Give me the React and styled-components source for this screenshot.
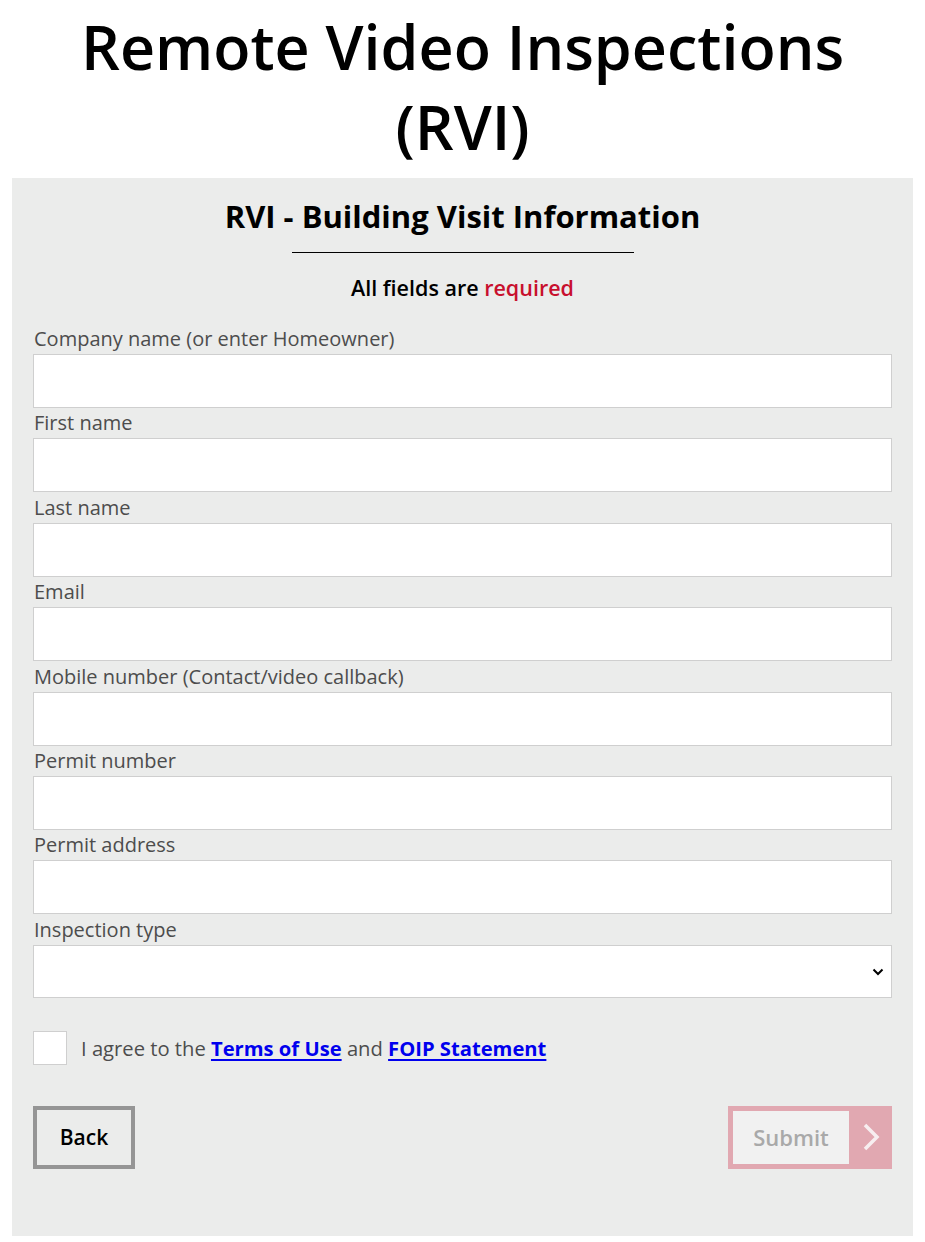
import React from 'react';
import styled, { createGlobalStyle } from 'styled-components';

const GlobalStyle = createGlobalStyle`
  body {
    margin: 0;
    background: #ffffff;
    font-family: "Open Sans", "Liberation Sans", sans-serif;
  }
`;

const Page = styled.div`
  padding: 0 12px 6px;
`;

const Title = styled.h1`
  margin: 0;
  padding-top: 7px;
  text-align: center;
  font-size: 61px;
  line-height: 80px;
  font-weight: 600;
  color: #000;
  height: 171px;
`;

const Panel = styled.div`
  background-color: #ebeceb;
  padding: 19px 21px 67px 21px;
`;

const FormTitle = styled.h2`
  margin: 0;
  text-align: center;
  font-size: 31px;
  line-height: 38px;
  font-weight: 700;
  color: #000;
`;

const Divider = styled.hr`
  width: 342px;
  margin: 17px auto 0;
  border: none;
  border-top: 1px solid #000;
`;

const Required = styled.p`
  margin: 20px 0 21px;
  text-align: center;
  font-size: 21.5px;
  line-height: 30px;
  font-weight: 600;
  color: #000;
  span {
    color: #c8102e;
  }
`;

const Field = styled.div`
  display: flex;
  flex-direction: column;
  margin-bottom: 0.4px;
`;

const Label = styled.label`
  font-size: 20px;
  line-height: 30px;
  color: #4d4d4d;
  padding-left: 1px;
`;

const Input = styled.input`
  box-sizing: border-box;
  height: 54px;
  width: 100%;
  border: 1px solid #cfcfcf;
  background: #fff;
  outline: none;
  font-size: 18px;
  padding: 0 12px;
`;

const SelectWrap = styled.div`
  position: relative;
`;

const Select = styled.select`
  box-sizing: border-box;
  appearance: none;
  height: 53px;
  width: 100%;
  border: 1px solid #cfcfcf;
  background: #fff;
  outline: none;
  font-size: 18px;
  padding: 0 12px;
`;

const Chevron = styled.svg`
  position: absolute;
  right: 8px;
  top: 22px;
  pointer-events: none;
`;

const AgreeRow = styled.div`
  display: flex;
  align-items: center;
  gap: 14px;
  margin-top: 33px;
`;

const Box = styled.span`
  box-sizing: border-box;
  width: 34px;
  height: 34px;
  background: #fff;
  border: 1px solid #cfcfcf;
`;

const AgreeText = styled.span`
  font-size: 20.2px;
  color: #4d4d4d;
  a {
    color: #0000ee;
    font-weight: 700;
    text-decoration: underline;
    text-underline-offset: 3px;
  }
`;

const Actions = styled.div`
  display: flex;
  justify-content: space-between;
  margin-top: 41px;
`;

const BackButton = styled.button`
  box-sizing: border-box;
  width: 102px;
  height: 63px;
  background: transparent;
  border: 4px solid #959595;
  font-family: "Open Sans", "Liberation Sans", sans-serif;
  font-size: 21px;
  font-weight: 600;
  color: #000;
`;

const SubmitButton = styled.button`
  box-sizing: border-box;
  display: flex;
  height: 63px;
  padding: 5px 0 5px 5px;
  background: #e1a8b1;
  border: none;
  font-family: "Open Sans", "Liberation Sans", sans-serif;
`;

const SubmitLabel = styled.span`
  display: flex;
  align-items: center;
  justify-content: center;
  width: 116px;
  background: #f1f1f1;
  font-size: 22px;
  font-weight: 600;
  color: #a9a9a9;
`;

const Arrow = styled.span`
  display: flex;
  align-items: center;
  justify-content: center;
  width: 43px;
`;

const fields = [
  'Company name (or enter Homeowner)',
  'First name',
  'Last name',
  'Email',
  'Mobile number (Contact/video callback)',
  'Permit number',
  'Permit address',
];

const App = () => {
  return (
    <Page>
      <GlobalStyle />
      <Title>Remote Video Inspections (RVI)</Title>
      <Panel>
        <FormTitle>RVI - Building Visit Information</FormTitle>
        <Divider />
        <Required>All fields are <span>required</span></Required>
        {fields.map((f) => (
          <Field key={f}>
            <Label>{f}</Label>
            <Input type="text" />
          </Field>
        ))}
        <Field>
          <Label>Inspection type</Label>
          <SelectWrap>
            <Select defaultValue="">
              <option value=""></option>
            </Select>
            <Chevron width="12" height="9" viewBox="0 0 12 9">
              <path d="M1.5 2.5 L6 7 L10.5 2.5" fill="none" stroke="#000" strokeWidth="2" />
            </Chevron>
          </SelectWrap>
        </Field>
        <AgreeRow>
          <Box />
          <AgreeText>
            I agree to the <a href="#terms">Terms of Use</a> and <a href="#foip">FOIP Statement</a>
          </AgreeText>
        </AgreeRow>
        <Actions>
          <BackButton>Back</BackButton>
          <SubmitButton disabled>
            <SubmitLabel>Submit</SubmitLabel>
            <Arrow>
              <svg width="20" height="30" viewBox="0 0 20 30">
                <path d="M4 3 L16 15 L4 27" fill="none" stroke="#f7eef0" strokeWidth="3.5" />
              </svg>
            </Arrow>
          </SubmitButton>
        </Actions>
      </Panel>
    </Page>
  );
};

export default App;
